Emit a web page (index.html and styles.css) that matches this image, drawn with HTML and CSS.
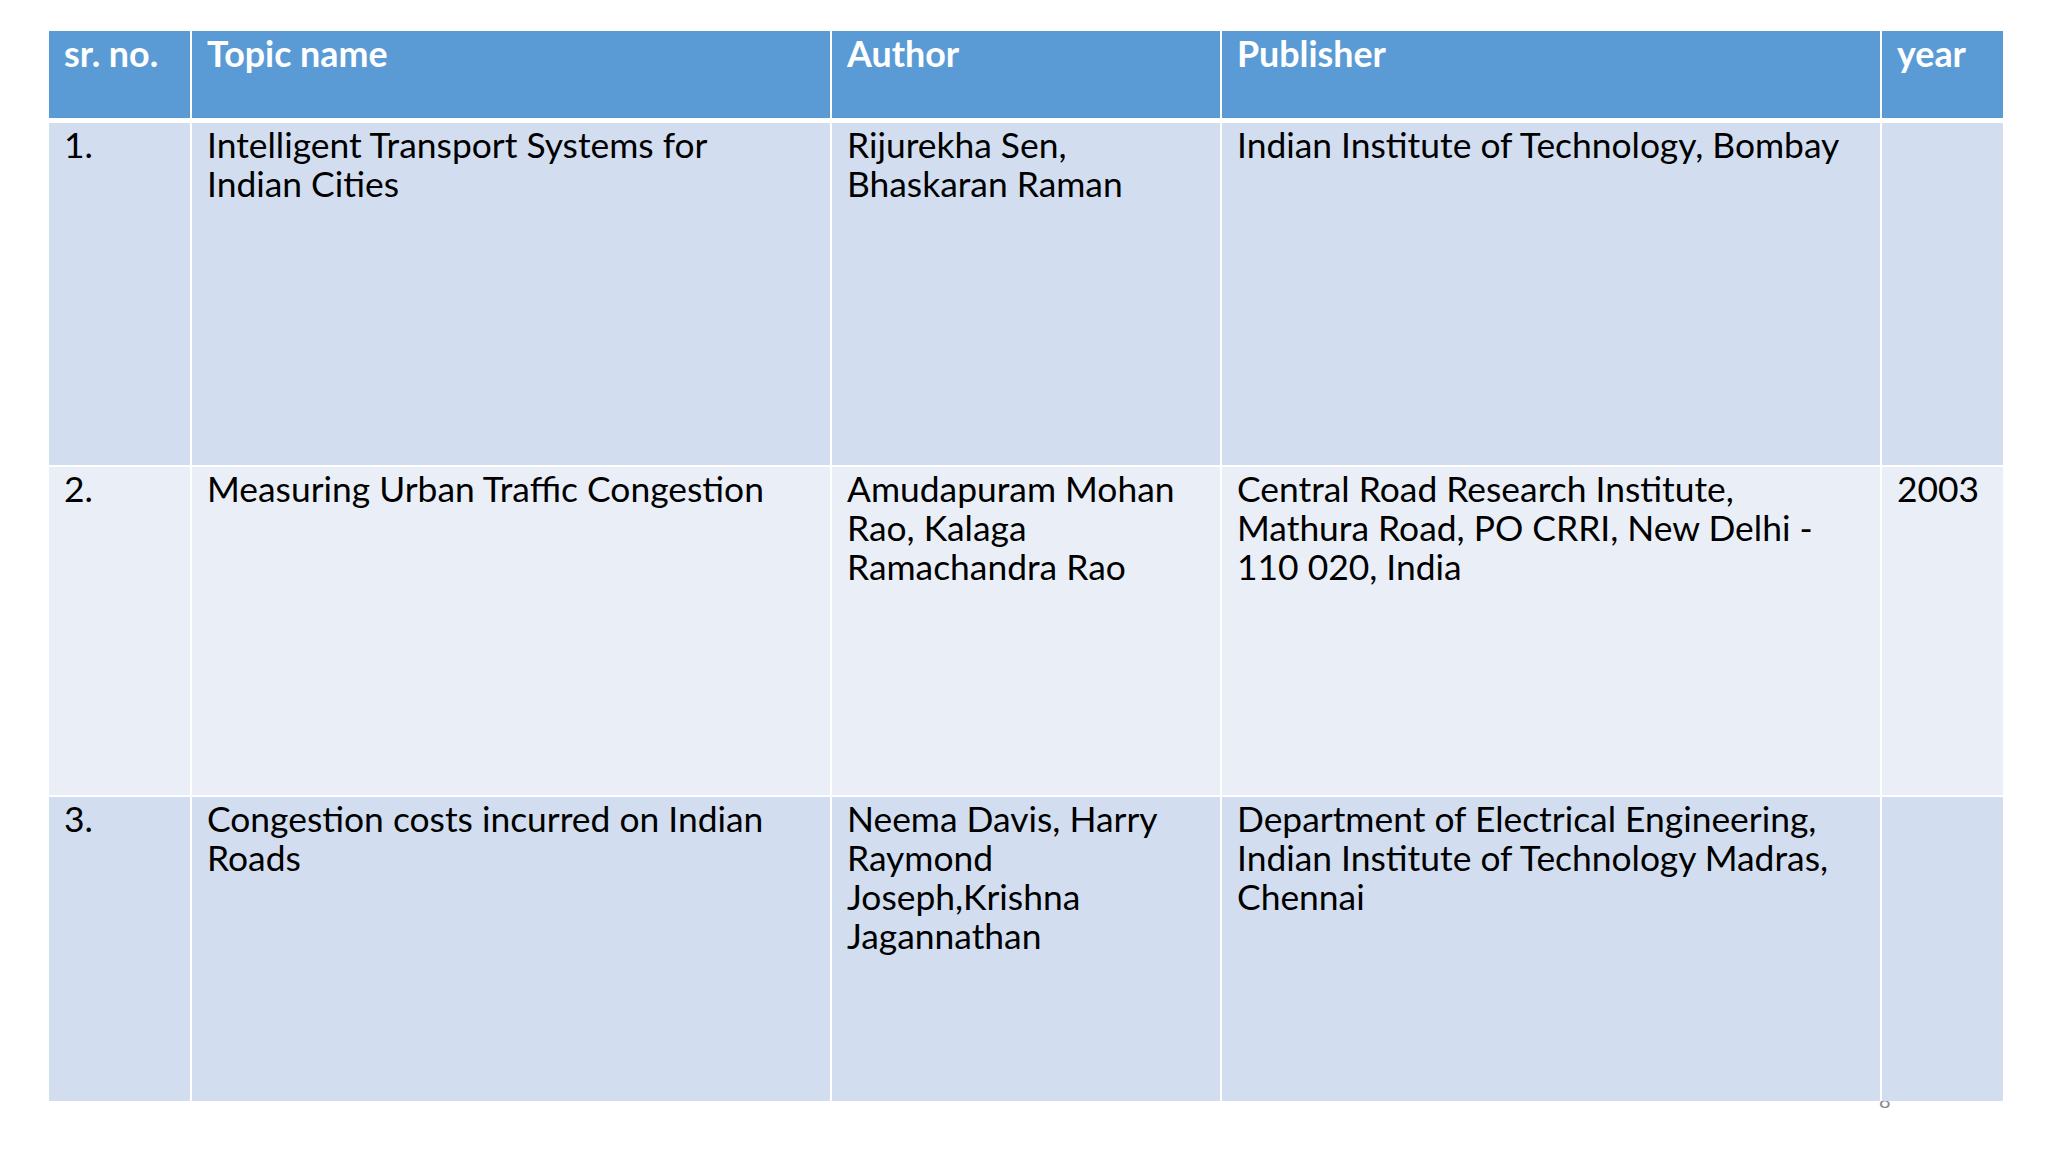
FILE: index.html
```html
<!DOCTYPE html>
<html lang="en">
<head>
<meta charset="utf-8">
<title>Literature survey</title>
<link rel="stylesheet" href="styles.css">
</head>
<body>
<div class="slide">
  <div class="table">
    <div class="cell head">sr. no.</div>
    <div class="cell head">Topic name</div>
    <div class="cell head">Author</div>
    <div class="cell head">Publisher</div>
    <div class="cell head">year</div>

    <div class="cell band1">1.</div>
    <div class="cell band1">Intelligent Transport Systems for<br>Indian Cities</div>
    <div class="cell band1">Rijurekha Sen,<br>Bhaskaran Raman</div>
    <div class="cell band1">Indian Institute of Technology, Bombay</div>
    <div class="cell band1"></div>

    <div class="cell band2">2.</div>
    <div class="cell band2">Measuring Urban Traffic Congestion</div>
    <div class="cell band2">Amudapuram Mohan<br>Rao, Kalaga<br>Ramachandra Rao</div>
    <div class="cell band2">Central Road Research Institute,<br>Mathura Road, PO CRRI, New Delhi -<br>110 020, India</div>
    <div class="cell band2">2003</div>

    <div class="cell band1">3.</div>
    <div class="cell band1">Congestion costs incurred on Indian<br>Roads</div>
    <div class="cell band1">Neema Davis, Harry<br>Raymond<br>Joseph,Krishna<br>Jagannathan</div>
    <div class="cell band1">Department of Electrical Engineering,<br>Indian Institute of Technology Madras,<br>Chennai</div>
    <div class="cell band1"></div>
  </div>
  <span class="slide-num">8</span>
</div>
</body>
</html>
```

FILE: styles.css
```css
html, body {
  margin: 0;
  padding: 0;
  background: #ffffff;
}

.slide {
  position: relative;
  width: 2048px;
  height: 1152px;
  padding: 31px 0 0 49px;
  box-sizing: border-box;
  font-family: Lato, "Open Sans", sans-serif;
  overflow: hidden;
}

.table {
  position: relative;
  z-index: 1;
  display: grid;
  grid-template-columns: 141px 638px 388px 658px 121px;
  grid-template-rows: 90px 342px 328px 304px;
  column-gap: 2px;
  row-gap: 2px;
  width: 1954px;
  background: #ffffff;
}

.cell {
  padding: 2px 15px 0 15px;
  font-size: 35.4px;
  line-height: 39px;
  color: #000000;
  white-space: nowrap;
}

.head {
  padding-top: 3px;
  font-size: 35.8px;
  background: #5b9bd5;
  color: #ffffff;
  font-weight: 700;
  margin-bottom: 3px;
}

.band1 {
  background: #d2deef;
}

.band2 {
  background: #eaeff7;
}

.slide-num {
  position: absolute;
  left: 1879px;
  top: 1090px;
  font-size: 20px;
  line-height: 20px;
  color: #898989;
}
```
